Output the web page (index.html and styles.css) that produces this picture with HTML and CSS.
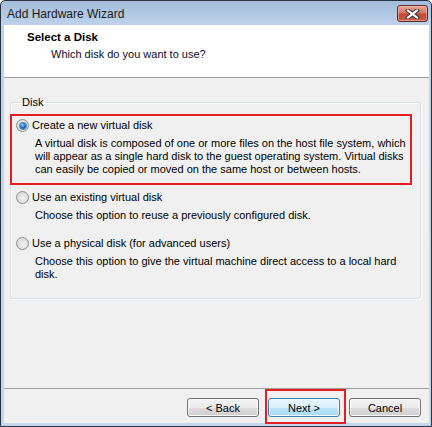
FILE: index.html
```html
<!DOCTYPE html>
<html lang="en">
<head>
    <meta charset="UTF-8">
    <title>Add Hardware Wizard</title>
    <link rel="stylesheet" href="styles.css">
</head>
<body>
    <div class="window">
        <div class="titlebar">
            <span class="title">Add Hardware Wizard</span>
            <button class="close" aria-label="Close">
                <svg width="15" height="10" viewBox="0 0 15 10">
                    <path d="M3 1.5 L12 8.5 M12 1.5 L3 8.5" stroke="#3b3b3b" stroke-width="4.2" stroke-linecap="square"/>
                    <path d="M3 1.5 L12 8.5 M12 1.5 L3 8.5" stroke="#ffffff" stroke-width="2.2" stroke-linecap="square"/>
                </svg>
            </button>
        </div>

        <div class="client">
            <div class="header">
                <div class="header-title">Select a Disk</div>
                <div class="header-sub">Which disk do you want to use?</div>
            </div>

            <div class="content">
                <fieldset class="group">
                    <legend>Disk</legend>

                    <!-- first option is marked with the red frame -->
                    <div class="option marked">
                        <label class="choice"><span class="radio checked"></span>Create a new virtual disk</label>
                        <p class="desc">A virtual disk is composed of one or more files on the host file system, which<br>will appear as a single hard disk to the guest operating system. Virtual disks<br>can easily be copied or moved on the same host or between hosts.</p>
                    </div>

                    <div class="option">
                        <label class="choice"><span class="radio"></span>Use an existing virtual disk</label>
                        <p class="desc">Choose this option to reuse a previously configured disk.</p>
                    </div>

                    <div class="option">
                        <label class="choice"><span class="radio"></span>Use a physical disk (for advanced users)</label>
                        <p class="desc">Choose this option to give the virtual machine direct access to a local hard<br>disk.</p>
                    </div>
                </fieldset>
            </div>

            <div class="footer">
                <button class="btn">&lt; Back</button>
                <span class="marked-btn"><button class="btn default">Next &gt;</button></span>
                <button class="btn">Cancel</button>
            </div>
        </div>
    </div>
</body>
</html>
```

FILE: styles.css
```css
body {
    margin: 0;
    background: #ffffff;
    font-family: 'Liberation Sans', Arial, sans-serif;
    font-size: 11px;
    color: #000;
}
.window {
    width: 432px;
    height: 427px;
    box-sizing: border-box;
    border: 1px solid #27313d;
    border-radius: 5px 5px 0 0;
    padding: 0 2px 3px 3px;
    background: linear-gradient(#a3bcda 0, #bed2ea 24px, #c4d7ec 100%);
    display: flex;
    flex-direction: column;
}
.titlebar {
    height: 24px;
    display: flex;
    justify-content: space-between;
    align-items: flex-start;
    padding-left: 3px;
}
.title {
    font-size: 12px;
    line-height: 22px;
    padding-top: 2px;
    color: #1a1a1a;
}
.close {
    width: 31px;
    height: 17px;
    margin-top: 4px;
    margin-right: 1px;
    padding: 0;
    border: 1px solid #5b2a25;
    border-radius: 3px;
    background: linear-gradient(#e8a496 0%, #d47565 45%, #c24a35 55%, #c85b45 100%);
    box-shadow: inset 0 0 0 1px rgba(255, 220, 210, 0.45);
    display: flex;
    align-items: center;
    justify-content: center;
}
.client {
    flex: 1;
    display: flex;
    flex-direction: column;
    background: #f0f0f0;
}
.header {
    height: 46px;
    background: #ffffff;
    border-bottom: 1px solid #a0a0a0;
    padding: 6px 0 0 23px;
    box-sizing: content-box;
}
.header-title {
    font-weight: bold;
    font-size: 11.5px;
    line-height: 13px;
}
.header-sub {
    line-height: 13px;
    margin-top: 4px;
    padding-left: 24px;
    color: #0c0c2c;
}
.content {
    flex: 1;
}
.group {
    margin: 18px 8px 0 6px;
    padding: 10px 5px 17px 5px;
    border: 1px solid #d5dfe5;
    border-radius: 3px;
    box-shadow: inset 1px 1px 0 #ffffff, 1px 1px 0 #ffffff;
}
.group legend {
    margin-left: 4px;
    padding: 0 2px;
    line-height: 13px;
}
.option {
    margin-top: 15px;
}
.option:first-of-type {
    margin-top: 0;
}
.option.marked {
    position: relative;
}
.option.marked::before {
    content: "";
    position: absolute;
    left: -6px;
    top: -5px;
    right: 3px;
    bottom: -9px;
    border: 2px solid #e51d25;
}
.choice {
    display: flex;
    align-items: center;
    gap: 3px;
    height: 13px;
    line-height: 13px;
}
.radio {
    width: 11px;
    height: 11px;
    border: 1px solid #8b8c8c;
    border-radius: 50%;
    background: radial-gradient(circle at 55% 60%, #f4f4f4 0%, #dcdcdc 60%, #ececec 100%);
    display: flex;
    align-items: center;
    justify-content: center;
}
.radio.checked::after {
    content: "";
    width: 6px;
    height: 6px;
    border-radius: 50%;
    background: radial-gradient(circle at 40% 35%, #8fd0ff 0%, #2a74c4 45%, #0b3f80 100%);
    box-shadow: 0 0 0 1px #5d8fc2;
}
.desc {
    margin: 5px 0 0 19px;
    line-height: 13px;
}
.footer {
    height: 35px;
    box-sizing: border-box;
    border-top: 1px solid #a0a0a0;
    padding: 9px 8px 0 0;
    display: flex;
    justify-content: flex-end;
    align-items: flex-start;
    gap: 9px;
}
.btn {
    width: 72px;
    height: 19px;
    padding: 0;
    font-family: 'Liberation Sans', Arial, sans-serif;
    font-size: 11px;
    color: #000;
    border: 1px solid #707070;
    border-radius: 3px;
    background: linear-gradient(#f2f2f2 0%, #ebebeb 50%, #dddddd 50%, #cfcfcf 100%);
    box-shadow: inset 0 0 0 1px #fbfbfb;
}
.btn.default {
    border-color: #3c7fb1;
    background: linear-gradient(#eaf6fd 0%, #d9f0fc 50%, #bee6fd 50%, #a7d9f5 100%);
    box-shadow: inset 0 0 0 1px #f4fbff;
}
.marked-btn {
    position: relative;
    display: flex;
}
.marked-btn::after {
    content: "";
    position: absolute;
    left: -3px;
    top: -9px;
    right: -6px;
    bottom: -7px;
    border: 2px solid #e51d25;
}
```
